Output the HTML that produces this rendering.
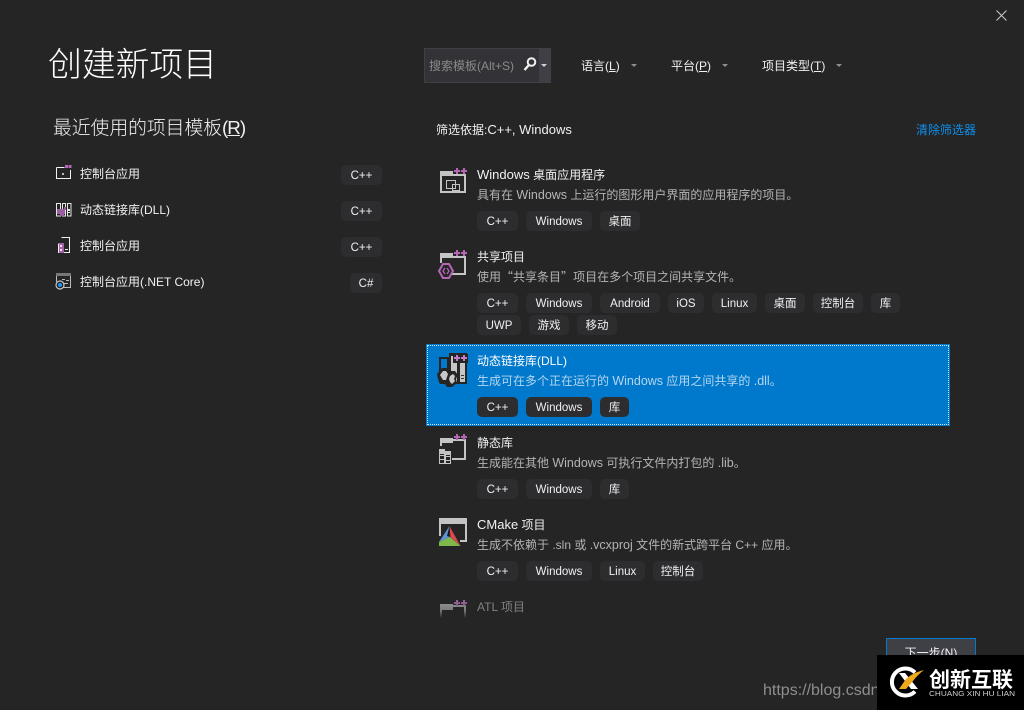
<!DOCTYPE html>
<html lang="zh"><head><meta charset="utf-8"><title>创建新项目</title>
<style>
html,body{margin:0;padding:0;background:#252526}
body{position:relative;width:1024px;height:710px;overflow:hidden;font-family:"Liberation Sans","Noto Sans CJK SC",sans-serif;font-size:12px;color:#f1f1f1}
.t{position:absolute;white-space:nowrap;line-height:20px;height:20px;padding-top:1px}
.d{color:#b4b4b4}
.l{font-size:13px}
.m{font-size:12.500px}
.q{font-family:"Noto Sans CJK SC",sans-serif}
.c{position:absolute;height:20px;line-height:22px;background:#2d2d30;border-radius:5px;text-align:center;color:#f1f1f1;font-size:11.500px;white-space:nowrap}
u{text-decoration:underline;text-underline-offset:1px}
svg{position:absolute;left:0;top:0}
</style></head><body>

<div style="position:absolute;left:426px;top:344px;width:524px;height:82px;background:#0078cc"></div>
<div style="position:absolute;left:427px;top:345px;width:520px;height:78px;border:1px dotted #cfe6f7"></div>

<div class="t" style="left:48px;top:41px;height:46px;line-height:46px;font-size:33.800px;color:#fff;font-weight:300">创建新项目</div>
<div class="t" style="left:53px;top:113px;height:28px;line-height:28px;font-size:18.800px;color:#f1f1f1;font-weight:300">最近使用的项目模板<span style="letter-spacing:-1px">(<u>R</u>)</span></div>

<div class="t" style="left:80px;top:163px">控制台应用</div>
<div class="t" style="left:80px;top:199px">动态链接库(DLL)</div>
<div class="t" style="left:80px;top:235px">控制台应用</div>
<div class="t" style="left:80px;top:271px">控制台应用(.NET Core)</div>
<div class="c" style="left:341px;top:165px;width:41px">C++</div>
<div class="c" style="left:341px;top:201px;width:41px">C++</div>
<div class="c" style="left:341px;top:237px;width:41px">C++</div>
<div class="c" style="left:350px;top:273px;width:32px">C#</div>

<div style="position:absolute;left:424px;top:48px;width:127px;height:35px;background:#333337;box-sizing:border-box;border:1px solid #3f3f46"></div>
<div style="position:absolute;left:539px;top:49px;width:12px;height:33px;background:#3f3f46"></div>
<div class="t" style="left:429px;top:55px;color:#8a8a8a">搜索模板(Alt+S)</div>
<div class="t" style="left:581px;top:55px">语言(<u>L</u>)</div>
<div class="t" style="left:671px;top:55px">平台(<u>P</u>)</div>
<div class="t" style="left:762px;top:55px">项目类型(<u>T</u>)</div>
<div class="t" style="left:436px;top:119px">筛选依据:<span class="l">C++, Windows</span></div>
<div class="t" style="left:916px;top:119px;color:#0d8fee">清除筛选器</div>

<div class="t" style="left:477px;top:164px"><span class="l">Windows</span> 桌面应用程序</div>
<div class="t d" style="left:477px;top:184px">具有在 <span class="m">Windows</span> 上运行的图形用户界面的应用程序的项目。</div>
<div class="c" style="left:477px;top:211px;width:41px">C++</div>
<div class="c" style="left:526px;top:211px;width:66px">Windows</div>
<div class="c" style="left:600px;top:211px;width:40px">桌面</div>

<div class="t" style="left:477px;top:246px">共享项目</div>
<div class="t d" style="left:477px;top:266px">使用<span class="q">“</span>共享条目<span class="q">”</span>项目在多个项目之间共享文件。</div>
<div class="c" style="left:477px;top:293px;width:41px">C++</div>
<div class="c" style="left:526px;top:293px;width:66px">Windows</div>
<div class="c" style="left:600px;top:293px;width:60px">Android</div>
<div class="c" style="left:668px;top:293px;width:36px">iOS</div>
<div class="c" style="left:712px;top:293px;width:45px">Linux</div>
<div class="c" style="left:765px;top:293px;width:40px">桌面</div>
<div class="c" style="left:813px;top:293px;width:50px">控制台</div>
<div class="c" style="left:871px;top:293px;width:29px">库</div>
<div class="c" style="left:477px;top:315px;width:44px">UWP</div>
<div class="c" style="left:529px;top:315px;width:40px">游戏</div>
<div class="c" style="left:577px;top:315px;width:40px">移动</div>

<div class="t" style="left:477px;top:350px;color:#fff">动态链接库(DLL)</div>
<div class="t" style="left:477px;top:370px;color:#b5d6ef">生成可在多个正在运行的 <span class="m">Windows</span> 应用之间共享的 <span class="m">.dll</span>。</div>
<div class="c" style="left:477px;top:397px;width:41px">C++</div>
<div class="c" style="left:526px;top:397px;width:66px">Windows</div>
<div class="c" style="left:600px;top:397px;width:29px">库</div>

<div class="t" style="left:477px;top:432px">静态库</div>
<div class="t d" style="left:477px;top:452px">生成能在其他 <span class="m">Windows</span> 可执行文件内打包的 <span class="m">.lib</span>。</div>
<div class="c" style="left:477px;top:479px;width:41px">C++</div>
<div class="c" style="left:526px;top:479px;width:66px">Windows</div>
<div class="c" style="left:600px;top:479px;width:29px">库</div>

<div class="t" style="left:477px;top:514px"><span class="l">CMake</span> 项目</div>
<div class="t d" style="left:477px;top:534px">生成不依赖于 .sln 或 <span class="m">.vcxproj</span> 文件的新式跨平台 C++ 应用。</div>
<div class="c" style="left:477px;top:561px;width:41px">C++</div>
<div class="c" style="left:526px;top:561px;width:66px">Windows</div>
<div class="c" style="left:600px;top:561px;width:45px">Linux</div>
<div class="c" style="left:653px;top:561px;width:50px">控制台</div>

<div class="t" style="left:477px;top:596px;color:#808080">ATL 项目</div>

<div style="position:absolute;left:886px;top:638px;width:90px;height:30px;box-sizing:border-box;border:1px solid #007acc;background:#3f3f46;text-align:center;line-height:29px;color:#f1f1f1;font-size:12px">下一步(<u>N</u>)</div>
<div class="t" style="left:763px;top:680px;font-size:16px;color:#8e8e8e;font-family:'Liberation Sans',sans-serif">https://blog.csdn</div>

<svg width="1024" height="710" viewBox="0 0 1024 710">
<defs>
<linearGradient id="fade" x1="0" y1="0" x2="0" y2="1"><stop offset="0" stop-color="#fff" stop-opacity=".75"/><stop offset=".6" stop-color="#fff" stop-opacity=".55"/><stop offset="1" stop-color="#fff" stop-opacity="0"/></linearGradient>
<mask id="m"><rect x="436" y="598" width="36" height="20" fill="url(#fade)"/></mask>
</defs>

<path d="M996.500 10.500l10 10M1006.500 10.500l-10 10" stroke="#c4c4c4" stroke-width="1.100" fill="none"/>

<circle cx="531.500" cy="62" r="3.800" fill="none" stroke="#f1f1f1" stroke-width="2"/>
<path d="M528.500 65.500l-4 4.500" stroke="#f1f1f1" stroke-width="2.400" fill="none"/>
<path d="M541 64h6l-3 3z" fill="#d0d0d0"/>
<path d="M631 64h6l-3 3zM722 64h6l-3 3zM836 64h6l-3 3z" fill="#8f8f8f"/>

<!-- left icons -->
<g shape-rendering="crispEdges">
<path d="M56.500 167.500h8M70.500 170v8.500h-14v-11" fill="none" stroke="#f1f1f1"/>
<path d="M62 173h2v2h-2z" fill="#bbb"/>
<path d="M65 165h3v3h-3zM68.500 165h3v3h-3z" fill="#b367b5"/>

<path d="M56.500 203.500h4v12.500h-4zM62.500 203.500h3v12.500h-3zM67.500 203.500h3.500v12.500h-3.500z" fill="#252526" stroke="#e6e6e6"/>
<path d="M57 209h8v5h-8zM60 213h4v3h-4zM64 207h2v3h-2z" fill="#9a5f9f"/>
<path d="M68 209h2v2h-2zM68 212h2v1h-2z" fill="#e6e6e6"/>

<path d="M61.500 237.500h8v15h-11v-9" fill="none" stroke="#f1f1f1"/>
<path d="M59 243h5v10h-5z" fill="#a75fac"/>
<path d="M60 245h2v2h-2zM60 249h2v2h-2zM65 249h3v1h-3z" fill="#e8e8e8"/>

<path d="M56 273.500h14.500v14h-9M56.500 273v9" fill="none" stroke="#bdbdbd"/>
<path d="M56 273h15v3H56z" fill="#777"/>
<path d="M62 279h3v1h-3zM66 280h3v1h-3zM62 283h6v1h-6z" fill="#bbb"/>
</g>
<circle cx="60" cy="285" r="4" fill="#222" stroke="#c8c8c8" stroke-width="1.200"/>
<circle cx="60" cy="285" r="2" fill="#1c97ea"/>

<!-- icon 1 -->
<g shape-rendering="crispEdges">
<path d="M440 171h13v5h-13z" fill="#c4c4c4"/>
<path d="M441 172v20h24v-17h-24" fill="none" stroke="#c4c4c4" stroke-width="2"/>
<path d="M446.500 180.500h9v8h-9zM452.500 184.500h7v6h-7z" fill="#252526" stroke="#c4c4c4"/>
<path d="M454 170h6v2h-6zM456 168h2v6h-2zM461 170h6v2h-6zM463 168h2v6h-2z" fill="#b367b5"/>

<!-- icon 2 -->
<path d="M440 253h13v5h-13z" fill="#c4c4c4"/>
<path d="M441 256v-2M448 274h17v-17h-24v6" fill="none" stroke="#c4c4c4" stroke-width="2"/>
<path d="M454 252h6v2h-6zM456 250h2v6h-2zM461 252h6v2h-6zM463 250h2v6h-2z" fill="#b367b5"/>
</g>
<path d="M443 264h6l4 7-4 7h-6l-4-7z" fill="#252526" stroke="#b367b5" stroke-width="2"/>
<path d="M445 268l-2 3 2 3M447 268l2 3-2 3" fill="none" stroke="#b367b5" stroke-width="1.300"/>

<!-- icon 3 DLL selected -->
<g shape-rendering="crispEdges">
<path d="M439 357h10v26h-10z" fill="#252526"/>
<path d="M441 359h6v12h-6z" fill="#0078cc"/>
<path d="M449 353h18v31h-18z" fill="#252526"/>
<path d="M451 356h6v26h-6z" fill="#c6c6c6"/>
<path d="M460 360h5v22h-5z" fill="#c6c6c6"/>
<path d="M461 375h3v1h-3zM461 378h3v1h-3z" fill="#333"/>
<path d="M453 354h15v9h-15z" fill="#252526"/>
<path d="M454 357h6v2h-6zM456 355h2v6h-2zM461 357h6v2h-6zM463 355h2v6h-2z" fill="#c47cc6"/>
</g>
<path d="M437 374l5-6h5l3 3h5l3 4-2 4 1 4-5 4h-5l-2-3h-5l-2-5z" fill="#252526"/>
<path d="M440 375l3-4h3l2 3-1 3-1 3h-3zM450 376l3-2 2 2-1 3 1 2-3 3-2-2-1-3z" fill="#c9c9c9"/>

<!-- icon 4 -->
<g shape-rendering="crispEdges">
<path d="M440 438h13v5h-13z" fill="#c4c4c4"/>
<path d="M441 446v-6h24v19h-13" fill="none" stroke="#c4c4c4" stroke-width="2"/>
<path d="M454 436h6v2h-6zM456 434h2v6h-2zM461 436h6v2h-6zM463 434h2v6h-2z" fill="#b367b5"/>
<path d="M439.500 449.500h5v14h-5zM445.500 451.500h5v12h-5z" fill="none" stroke="#c4c4c4"/>
<path d="M440 455h4v1h-4zM440 459h4v1h-4zM446 456h4v1h-4zM446 460h4v1h-4z" fill="#c4c4c4"/>
<path d="M440 450h4v4h-4zM446 452h4v3h-4z" fill="#c4c4c4"/>

<!-- icon 5 -->
<path d="M439 518h28v6h-28z" fill="#c4c4c4"/>
<path d="M440 524v12M466 524v17h-6" fill="none" stroke="#c4c4c4" stroke-width="2"/>
</g>
<path d="M449.500 526l-10.500 16 11-5z" fill="#5d94d3"/>
<path d="M449.500 526l11 20-7-10z" fill="#e6484f"/>
<path d="M449.500 526l4 10 7 10-10-9z" fill="#e6484f"/>
<path d="M439 542l11-5 10.500 9H439z" fill="#7fb84a"/>
<path d="M449.500 526l.5 11-3-1z" fill="#1a1a1a"/>

<!-- icon 6 -->
<g mask="url(#m)" shape-rendering="crispEdges">
<path d="M440 604h13v6h-13z" fill="#c4c4c4"/>
<path d="M441 620v-14h24v14" fill="none" stroke="#c4c4c4" stroke-width="2"/>
<path d="M454 602h6v2h-6zM456 600h2v6h-2zM461 602h6v2h-6zM463 600h2v6h-2z" fill="#c47cc6"/>
</g>

<!-- watermark -->
<rect x="877" y="655" width="147" height="55" fill="#000"/>
<path d="M915 672.500a13.500 13.500 0 1 0 0 19" fill="none" stroke="#fff" stroke-width="4"/>
<path d="M899 673h6l13 16h-7z" fill="#fff"/>
<path d="M924 670c-8 2-14 5-18 9l-7 10h7l7-8c3-4 7-8 11-11z" fill="#f0a81c"/>
<text x="929" y="687" font-size="21" font-weight="700" fill="#fff" font-family="'Liberation Sans','Noto Sans CJK SC',sans-serif">创新互联</text>
<text x="929" y="696" font-size="7.500" fill="#cfcfcf" textLength="86" lengthAdjust="spacingAndGlyphs" font-family="'Liberation Sans',sans-serif">CHUANG XIN HU LIAN</text>
</svg>
</body></html>
